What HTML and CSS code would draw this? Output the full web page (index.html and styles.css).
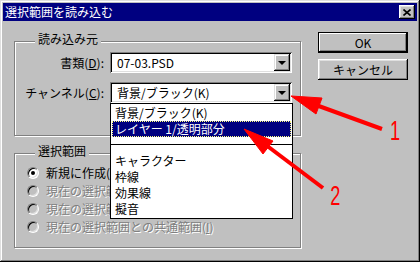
FILE: index.html
```html
<!DOCTYPE html>
<html lang="ja">
<head>
    <meta charset="UTF-8">
    <title>選択範囲を読み込む</title>
    <link rel="stylesheet" href="styles.css">
</head>
<body>
    <div class="window">
        <!-- Title bar -->
        <div class="titlebar">
            <span class="title">選択範囲を読み込む</span>
            <div class="close-btn">
                <svg width="8" height="7" viewBox="0 0 8 7">
                    <path d="M0.5 0.5 L7.5 6.5 M7.5 0.5 L0.5 6.5" stroke="#000" stroke-width="1.6" fill="none"/>
                </svg>
            </div>
        </div>

        <div class="content">
            <div class="left-col">
                <!-- Source group -->
                <div class="group group-source">
                    <span class="group-label">読み込み元</span>
                    <div class="form-grid">
                        <label class="field-label">書類(<u>D</u>):</label>
                        <div class="combo">
                            <span class="combo-value">07-03.PSD</span>
                            <span class="combo-btn"><span class="tri"></span></span>
                        </div>
                        <label class="field-label">チャンネル(<u>C</u>):</label>
                        <div class="combo">
                            <span class="combo-value">背景/ブラック(K)</span>
                            <span class="combo-btn"><span class="tri"></span></span>
                        </div>
                    </div>
                </div>

                <!-- Selection group -->
                <div class="group group-select">
                    <span class="group-label">選択範囲</span>
                    <div class="radio-list">
                        <div class="radio-row">
                            <span class="radio checked"></span>
                            <span class="radio-text">新規に作成(<u>N</u>)</span>
                        </div>
                        <div class="radio-row disabled">
                            <span class="radio"></span>
                            <span class="radio-text">現在の選択範囲に追加(<u>A</u>)</span>
                        </div>
                        <div class="radio-row disabled">
                            <span class="radio"></span>
                            <span class="radio-text">現在の選択範囲から削除(<u>S</u>)</span>
                        </div>
                        <div class="radio-row disabled">
                            <span class="radio"></span>
                            <span class="radio-text">現在の選択範囲との共通範囲(<u>I</u>)</span>
                        </div>
                    </div>
                </div>
            </div>

            <div class="right-col">
                <button class="btn btn-default">OK</button>
                <button class="btn">キャンセル</button>
            </div>
        </div>

        <!-- Opened channel list -->
        <ul class="dropdown">
            <li>背景/ブラック(K)</li>
            <li class="selected">レイヤー 1/透明部分</li>
            <li class="separator"></li>
            <li>キャラクター</li>
            <li>枠線</li>
            <li>効果線</li>
            <li>擬音</li>
        </ul>

        <!-- Red callouts -->
        <svg class="annotations" width="420" height="262" viewBox="0 0 420 262">
            <g fill="#ff0000" stroke="#ff0000">
                <line x1="382" y1="129" x2="305" y2="101" stroke-width="4"/>
                <polygon points="291,96 316,114 322,98" stroke-width="1"/>
                <line x1="323" y1="188" x2="258" y2="139" stroke-width="4"/>
                <polygon points="244,129 263,154 273,141" stroke-width="1"/>
            </g>
            <text class="callout-num" x="600" y="140" transform="scale(0.65 1)">1</text>
            <text class="callout-num" x="508" y="205" transform="scale(0.65 1)">2</text>
        </svg>
    </div>
</body>
</html>
```

FILE: styles.css
```css
body {
    margin: 0;
    background-color: #c0c0c0;
    font-family: "Noto Sans CJK JP", "Noto Sans", sans-serif;
    font-size: 12px;
    line-height: 14px;
    color: #000;
}

.window {
    position: relative;
    width: 420px;
    height: 262px;
    box-sizing: border-box;
    padding: 3px;
    background-color: #c0c0c0;
    overflow: hidden;
    box-shadow: inset -1px -1px #000, inset 1px 1px #dfdfdf,
                inset -2px -2px #808080, inset 2px 2px #fff;
}

/* Title bar */
.titlebar {
    height: 18px;
    background-color: #000080;
    color: #fff;
    display: flex;
    align-items: center;
    justify-content: space-between;
    padding: 0 2px;
}

.close-btn {
    width: 16px;
    height: 14px;
    box-sizing: border-box;
    background-color: #c0c0c0;
    display: flex;
    align-items: center;
    justify-content: center;
    box-shadow: inset -1px -1px #000, inset 1px 1px #fff,
                inset -2px -2px #808080, inset 2px 2px #dfdfdf;
}

.content {
    display: flex;
    padding: 11px 0 0 11px;
}

.left-col {
    width: 287px;
    padding-top: 9px;
}

.right-col {
    margin-left: 17px;
    display: flex;
    flex-direction: column;
    gap: 6px;
}

/* Group boxes */
.group {
    position: relative;
    height: 95px;
    box-sizing: border-box;
    border: 1px solid #808080;
    box-shadow: 1px 1px 0 #fff, inset 1px 1px 0 #fff;
}

.group-label {
    position: absolute;
    top: -10px;
    left: 20px;
    padding: 0 3px;
    background-color: #c0c0c0;
}

.group-select {
    margin-top: 17px;
}

.form-grid {
    display: grid;
    grid-template-columns: 81px 182px;
    grid-auto-rows: 21px;
    column-gap: 6px;
    row-gap: 9px;
    padding: 10px 0 0 8px;
}

.field-label {
    justify-self: end;
    align-self: center;
}

.combo {
    display: flex;
    align-items: center;
    box-sizing: border-box;
    padding: 2px;
    background-color: #fff;
    box-shadow: inset 1px 1px #808080, inset -1px -1px #fff,
                inset 2px 2px #000, inset -2px -2px #dfdfdf;
}

.combo-value {
    flex: 1;
    padding-left: 5px;
}

.combo-btn {
    width: 16px;
    height: 17px;
    box-sizing: border-box;
    background-color: #c0c0c0;
    display: flex;
    align-items: center;
    justify-content: center;
    box-shadow: inset -1px -1px #000, inset 1px 1px #dfdfdf,
                inset -2px -2px #808080, inset 2px 2px #fff;
}

.tri {
    width: 0;
    height: 0;
    border-left: 4px solid transparent;
    border-right: 4px solid transparent;
    border-top: 4px solid #000;
    margin-top: 1px;
}

/* Radio buttons */
.radio-list {
    padding: 10px 0 0 12px;
}

.radio-row {
    height: 18px;
    display: flex;
    align-items: center;
    gap: 7px;
}

.radio {
    position: relative;
    width: 12px;
    height: 12px;
    box-sizing: border-box;
    border-radius: 50%;
    background-color: #fff;
    border: 1px solid;
    border-color: #808080 #fff #fff #808080;
    box-shadow: inset 1px 1px #000, inset -1px -1px #dfdfdf;
}

.radio.checked::after {
    content: "";
    position: absolute;
    left: 3px;
    top: 3px;
    width: 4px;
    height: 4px;
    border-radius: 50%;
    background-color: #000;
}

.radio-row.disabled .radio {
    background-color: #c0c0c0;
}

.radio-row.disabled .radio-text {
    color: #808080;
    text-shadow: 1px 1px 0 #fff;
}

/* Buttons */
.btn {
    width: 90px;
    height: 21px;
    border: none;
    padding: 0;
    background-color: #c0c0c0;
    font-family: inherit;
    font-size: 12px;
    color: #000;
    box-shadow: inset -1px -1px #000, inset 1px 1px #fff,
                inset -2px -2px #808080, inset 2px 2px #dfdfdf;
}

.btn-default {
    box-shadow: inset 0 0 0 1px #000, inset -2px -2px #000,
                inset 2px 2px #fff, inset -3px -3px #808080;
}

/* Dropdown list */
.dropdown {
    position: absolute;
    left: 110px;
    top: 103px;
    width: 183px;
    margin: 0;
    padding: 1px;
    list-style: none;
    box-sizing: border-box;
    background-color: #fff;
    border: 1px solid #000;
}

.dropdown li {
    height: 16px;
    line-height: 16px;
    padding-left: 3px;
}

.dropdown li.selected {
    background-color: #000080;
    color: #fff;
    outline: 1px dotted #ffff80;
    outline-offset: -1px;
}

.dropdown li.separator {
    position: relative;
}

.dropdown li.separator::after {
    content: "";
    position: absolute;
    left: -1px;
    right: -1px;
    top: 7px;
    border-top: 1px solid #000;
}

/* Callouts drawn over the dialog */
.annotations {
    position: absolute;
    left: 0;
    top: 0;
    pointer-events: none;
}

.callout-num {
    font-family: "Liberation Sans", sans-serif;
    font-size: 28px;
    fill: #ff0000;
}
```
